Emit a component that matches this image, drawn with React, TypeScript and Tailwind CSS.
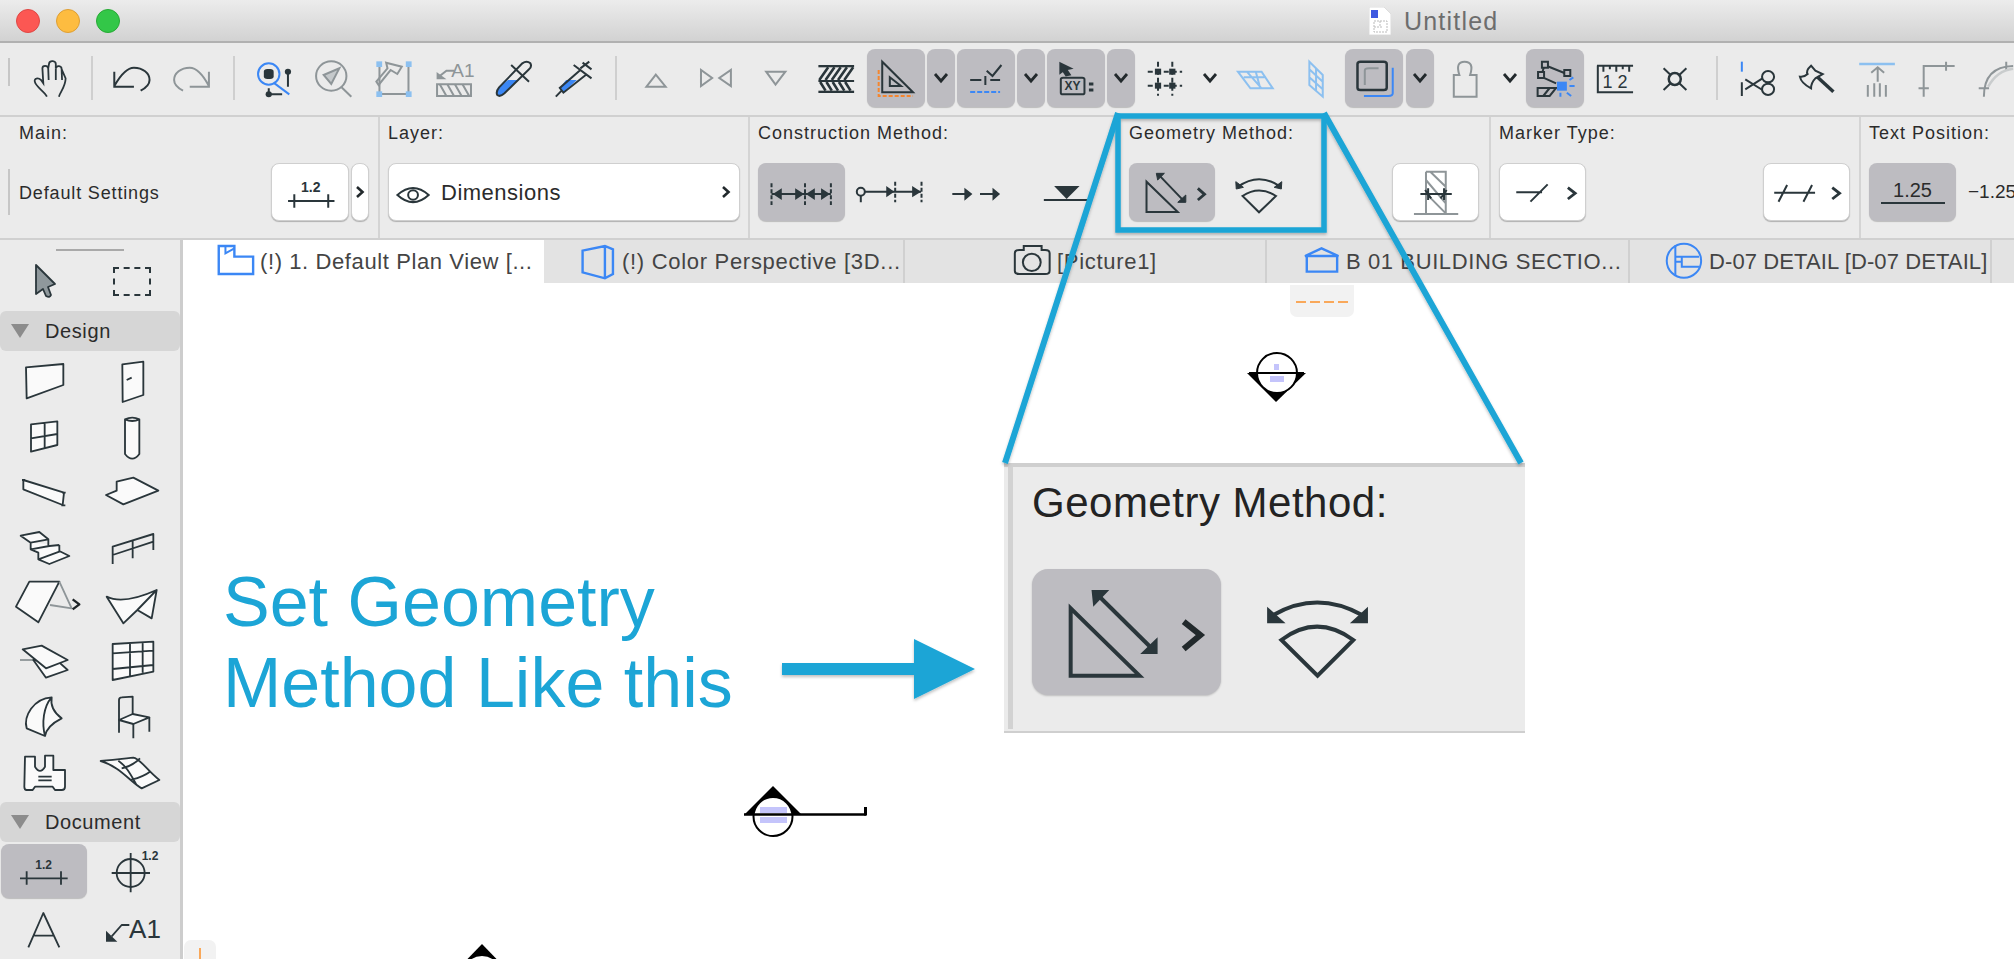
// App.tsx - Archicad window with geometry method annotation
import React from 'react';

const DARK = '#2a363b';
const GRAY = '#8e9598';
const BLUE = '#3b87f5';
const SKY = '#8cc0f0';
const CYAN = '#1ca5d6';

type ZProps = { x: number; y: number; w: number; h: number; ox?: number; oy?: number; sx?: number; sy?: number; children?: React.ReactNode };

// svg that takes its coordinates straight from the zoomed crops (x is 2.24x or 2.326x, y is 3x there)
const Z = ({ x, y, w, h, ox = 0, oy = 0, sx, sy = 3, children }: ZProps) => {
  const kx = sx ?? (ox === 1340 ? 2.326 : 2.24);
  return (
    <svg
      width={w}
      height={h}
      viewBox={`${(x - ox) * kx} ${(y - oy) * sy} ${w * kx} ${h * sy}`}
      preserveAspectRatio="none"
      fill="none"
      stroke={DARK}
      strokeWidth={2}
      className="block shrink-0 overflow-visible [&_*]:[vector-effect:non-scaling-stroke]"
    >
      {children}
    </svg>
  );
};

// text inside a Z svg, undoes the uneven scale
const T = ({ x, y, size, bold, fill = DARK, k = 0.7467, children }: { x: number; y: number; size: number; bold?: boolean; fill?: string; k?: number; children: React.ReactNode }) => (
  <text
    transform={`translate(${x} ${y}) scale(${k} 1)`}
    fontSize={size * 3}
    fontWeight={bold ? 700 : 400}
    textAnchor="middle"
    fill={fill}
    stroke="none"
  >
    {children}
  </text>
);

const ON = 'bg-[#bdbcc1] rounded-[8px] shadow-[0_1px_1px_rgba(0,0,0,0.2)]';
const WHITE = 'bg-white rounded-[8px] border border-[#cfcfcf] shadow-[0_1px_1px_rgba(0,0,0,0.25)]';

const Tool = ({ x, w = 60, ox = 0, on, className = '', children }: { x: number; w?: number; ox?: number; on?: boolean; className?: string; children?: React.ReactNode }) => (
  <div className={`h-[58px] shrink-0 ${on ? ON : ''} ${className}`}>
    <Z x={x} y={49} w={w} h={58} ox={ox}>
      {children}
    </Z>
  </div>
);

const ChevDown = () => (
  <svg width="16" height="12" viewBox="0 0 16 12" fill="none" stroke="#22292c" strokeWidth="2.8" className="shrink-0">
    <path d="M2 2 L8 9 L14 2" />
  </svg>
);

const DropBtn = ({ w = 28, on = true, className = '' }: { w?: number; on?: boolean; className?: string }) => (
  <div className={`h-[58px] shrink-0 flex items-center justify-center ${on ? ON : ''} ${className}`} style={{ width: w }}>
    <ChevDown />
  </div>
);

const Sep = ({ className = '' }: { className?: string }) => <div className={`w-[2px] h-[44px] shrink-0 bg-[#cfcfcf] ${className}`} />;

const Toolbar = () => (
  <div className="h-[72px] flex items-start pt-[6px] shrink-0 pl-[8px] overflow-hidden">
    <div className="w-[2px] h-[28px] mt-[9px] bg-[#c6c6c6] shrink-0" />
    <Tool x={20} className="ml-[10px]">
      <path d="M105 290 C100 275 80 260 78 245 C76 235 85 232 92 240 L97 250 L95 205 C95 195 107 195 108 205 L110 190 C112 180 125 182 125 192 V205 C127 195 138 197 138 207 L147 235 C147 260 135 275 132 290 M108 205 L109 240 M125 195 L125 240 M138 207 L139 240" strokeWidth={1.8} />
    </Tool>
    <Sep className="ml-[11px] mt-[7px]" />
    <Tool x={102} className="ml-[9px]">
      <path d="M256 215 V260 H300 M256 258 C270 225 285 203 300 203 C320 203 335 220 335 240 C335 255 325 265 315 272" />
    </Tool>
    <Tool x={162}>
      <path stroke={GRAY} d="M468 215 V260 H425 M468 258 C455 225 440 203 425 203 C405 203 390 220 390 240 C390 255 400 265 410 272" />
    </Tool>
    <Sep className="ml-[11px] mt-[7px]" />
    <Tool x={245} className="ml-[10px]">
      <ellipse cx={602} cy={222} rx={24} ry={32} stroke={BLUE} />
      <rect x={591} y={207} width={22} height={30} rx={8} fill={DARK} stroke="none" />
      <path d="M615 250 L648 283" stroke={BLUE} />
      <path d="M645 215 V260 M602 265 V283 H632" />
      <ellipse cx={645} cy={215} rx={7} ry={9} fill={DARK} stroke="none" />
      <ellipse cx={602} cy={283} rx={7} ry={9} fill={DARK} stroke="none" />
    </Tool>
    <Tool x={305}>
      <ellipse cx={742} cy={228} rx={34} ry={44} stroke={GRAY} />
      <path d="M765 262 L787 290" stroke={GRAY} />
      <path d="M725 225 L760 205 L742 252 Z" stroke={GRAY} fill="#c5c9cb" />
    </Tool>
    <Tool x={365}>
      <path d="M850 200 V282 H915 V192" stroke={GRAY} />
      <path d="M865 188 L900 200 L890 222 L875 210 L848 255 L843 245 L868 205 Z" stroke={GRAY} />
      <rect x={843} y={184} width={13} height={17} fill={SKY} stroke="none" />
      <rect x={909} y={184} width={13} height={17} fill={SKY} stroke="none" />
      <rect x={843} y={274} width={13} height={17} fill={SKY} stroke="none" />
      <rect x={909} y={274} width={13} height={17} fill={SKY} stroke="none" />
    </Tool>
    <Tool x={425}>
      <T x={1037} y={232} size={19} fill={GRAY}>A1</T>
      <path d="M1018 212 H1000 L985 228" stroke={GRAY} />
      <path d="M978 216 V238 H1000 Z" fill={GRAY} stroke="none" />
      <rect x={979} y={253} width={76} height={35} stroke={GRAY} />
      <path d="M985 253 L1000 288 M1002 253 L1017 288 M1019 253 L1034 288 M1036 253 L1051 288" stroke={GRAY} />
    </Tool>
    <Tool x={485}>
      <path d="M1138 240 H1162 L1130 280 Q1120 292 1114 285 Q1110 275 1118 262 Z" fill={BLUE} stroke="none" />
      <path d="M1170 190 Q1180 180 1188 190 Q1192 200 1185 208 L1130 280 Q1120 292 1114 285 Q1110 275 1118 262 Z M1145 195 L1185 245" />
    </Tool>
    <Tool x={545}>
      <path d="M1268 240 H1292 L1262 278 L1254 264 Z" fill={BLUE} stroke="none" />
      <path d="M1300 210 L1254 264 L1262 278 L1312 225 M1258 272 L1245 290 M1285 195 L1325 235 M1300 205 L1320 185 M1305 188 L1325 208" />
    </Tool>
    <Sep className="ml-[10px] mt-[7px]" />
    <Tool x={626} className="ml-[9px]">
      <path d="M1469 224 L1491 260 H1448 Z" stroke={GRAY} />
    </Tool>
    <Tool x={686} ox={680}>
      <path d="M47 210 V258 L72 234 Z M114 210 V258 L88 234 Z" stroke={GRAY} />
    </Tool>
    <Tool x={746} ox={680}>
      <path d="M193 215 H236 L214 254 Z" stroke={GRAY} />
    </Tool>
    <Tool x={806} ox={680}>
      <rect x={310} y={195} width={80} height={7} fill={DARK} stroke="none" />
      <rect x={310} y={240} width={80} height={6} fill={DARK} stroke="none" />
      <rect x={310} y={272} width={80} height={7} fill={DARK} stroke="none" />
      <path strokeWidth={2.6} d="M312 240 L332 202 M326 240 L346 202 M340 240 L360 202 M354 240 L374 202 M368 240 L388 202 M314 246 L326 272 M328 246 L340 272 M342 246 L354 272 M356 246 L368 272 M370 246 L382 272" />
    </Tool>
    <Tool x={867} w={58} ox={680} on className="ml-[1px]">
      <path d="M453 185 V277 H522 Z M470 232 V258 H495 Z" />
      <path d="M445 210 V288 H522" stroke="#f5862e" strokeDasharray="4 2" />
    </Tool>
    <DropBtn className="ml-[2px]" />
    <Tool x={957} w={58} ox={680} on className="ml-[2px]">
      <path d="M650 240 H675 M695 240 H717 M684 228 V255 M687 212 L700 228 L720 195" />
      <path d="M650 276 H717" stroke={BLUE} strokeDasharray="5 2" />
    </Tool>
    <DropBtn className="ml-[2px]" />
    <Tool x={1047} w={58} ox={680} on className="ml-[2px]">
      <path d="M852 190 L875 205 L865 208 L873 224 L865 226 L858 212 L852 218 Z" fill={DARK} />
      <rect x={853} y={233} width={53} height={50} rx={5} />
      <T x={879} y={270} size={12} bold>XY</T>
      <path d="M916 252 H926 M916 270 H926" strokeWidth={3} />
    </Tool>
    <DropBtn className="ml-[2px]" />
    <Tool x={1136} ox={680}>
      <path d="M1073 185 V287 M1105 185 V287 M1050 215 H1127 M1050 257 H1127" strokeDasharray="5 3" />
      <rect x={1066} y={206} width={14} height={18} fill={DARK} stroke="none" />
      <rect x={1098} y={206} width={14} height={18} fill={DARK} stroke="none" />
      <rect x={1066} y={248} width={14} height={18} fill={DARK} stroke="none" />
      <rect x={1098} y={248} width={14} height={18} fill={DARK} stroke="none" />
    </Tool>
    <DropBtn w={30} on={false} />
    <Tool x={1226} ox={680}>
      <path d="M1252 215 H1305 L1330 265 H1280 Z M1265 232 H1315 M1292 215 L1302 265 M1272 215 L1305 265" stroke={SKY} />
    </Tool>
    <Tool x={1287} w={59} ox={680} className="ml-[1px]">
      <path d="M1412 185 L1442 225 V290 L1412 255 Z M1412 208 L1442 245 M1412 232 L1442 268 M1427 205 V272" stroke={SKY} />
    </Tool>
    <Tool x={1346} w={58} ox={1340} on>
      <path d="M125 203 V280 Q125 288 115 288 H58" stroke={BLUE} />
      <rect x={43} y={185} width={68} height={85} rx={7} strokeWidth={2.5} />
      <path d="M60 255 V212 Q60 205 70 205 H92" stroke={GRAY} />
    </Tool>
    <DropBtn className="ml-[3px]" />
    <Tool x={1436} ox={1340} className="ml-[1px]">
      <path d="M280 225 Q270 185 292 185 Q315 185 305 225 H320 V290 H267 V225 Z" stroke={GRAY} />
    </Tool>
    <DropBtn w={30} on={false} />
    <Tool x={1527} w={58} ox={1340} on className="ml-[1px]">
      <path d="M478 195 L530 222 M478 195 L470 230 M470 230 L505 250" />
      <rect x={472} y={185} width={14} height={18} fill="#bdbcc1" />
      <rect x={524} y={210} width={14} height={18} fill="#bdbcc1" />
      <rect x={463} y={216} width={14} height={18} fill="#bdbcc1" />
      <path d="M462 288 V264 H505 L490 288 Z M475 288 L490 264" />
      <rect x={507} y={245} width={23} height={27} fill={BLUE} stroke="none" />
      <path d="M536 240 L545 232 M536 258 H548 M530 278 L540 288 M515 278 V290" stroke={BLUE} />
    </Tool>
    <Tool x={1586} ox={1340} className="ml-[1px]">
      <path d="M602 197 V277 H684 M600 197 H684 M615 197 V215 M630 197 V208 M645 197 V215 M660 197 V208 M675 197 V215" />
      <T x={642} y={265} size={18} k={0.775}>1 2</T>
    </Tool>
    <Tool x={1646} ox={1340}>
      <path d="M755 205 L808 270 M808 205 L755 270" />
      <ellipse cx={781} cy={237} rx={14} ry={18} fill="#ebebeb" strokeWidth={2.5} />
    </Tool>
    <Sep className="ml-[11px] mt-[7px]" />
    <Tool x={1728} ox={1340} className="ml-[9px]">
      <path d="M937 185 V215" stroke={BLUE} />
      <path d="M937 247 V288 M945 238 L985 270 M945 268 L985 235" />
      <ellipse cx={998} cy={230} rx={14} ry={17} />
      <ellipse cx={998} cy={268} rx={14} ry={17} />
    </Tool>
    <Tool x={1788} ox={1340}>
      <path d="M1098 197 L1108 212 L1125 222 L1108 235 Q1098 248 1098 265 Q1075 250 1072 230 Q1082 232 1090 222 Q1085 212 1098 197 Z" />
      <path d="M1112 230 L1150 275" strokeWidth={3.5} />
    </Tool>
    <Tool x={1848} ox={1340}>
      <path d="M1210 192 H1293" stroke={SKY} strokeWidth={2.5} />
      <path d="M1253 202 V245 M1238 218 L1253 202 L1268 218 M1230 255 V290 M1245 250 V290 M1258 250 V290 M1272 255 V290" stroke={GRAY} />
    </Tool>
    <Tool x={1908} ox={1340}>
      <path d="M1360 290 V198 H1432 M1412 185 V212 M1348 265 H1372" stroke={GRAY} />
    </Tool>
    <Tool x={1968} ox={1340}>
      <path d="M1500 290 Q1500 200 1568 198 M1488 265 H1512 M1552 185 V212" stroke={GRAY} />
      <path d="M1510 260 Q1530 212 1568 206" stroke="#c9cccd" strokeWidth={2.5} />
    </Tool>
  </div>
);

const RightChev = () => (
  <svg width="10" height="14" viewBox="0 0 10 14" fill="none" stroke="#22292c" strokeWidth="2.6" className="shrink-0">
    <path d="M2 2 L7.5 7 L2 12" />
  </svg>
);

const Label = ({ children }: { children: React.ReactNode }) => (
  <div className="text-[18px] leading-[22px] tracking-[1px] text-[#2b2b2b] h-[46px] pt-[5px] whitespace-nowrap">{children}</div>
);

const InfoBox = () => (
  <div className="h-[125px] shrink-0 flex border-t-2 border-b-2 border-[#d0d0d0] overflow-hidden">
    {/* Main */}
    <div className="w-[380px] shrink-0 border-r-2 border-[#d4d4d4] relative pl-[19px]">
      <Label>Main:</Label>
      <div className="flex items-center">
        <div className="w-[2px] h-[46px] bg-[#c6c6c6] -ml-[11px] mr-[9px] shrink-0" />
        <span className="text-[18px] tracking-[0.85px] text-[#2b2b2b] w-[252px] whitespace-nowrap mt-[2px]">Default Settings</span>
        <div className={`${WHITE} w-[78px] h-[58px] flex items-center justify-center`}>
          <Z x={271} y={163} w={76} h={56}>
            <T x={694} y={572} size={14} bold>1.2</T>
            <path d="M643 600 H747 M657 580 V620 M733 580 V620" />
          </Z>
        </div>
        <div className={`${WHITE} w-[18px] h-[58px] ml-[2px] flex items-center justify-center`}>
          <RightChev />
        </div>
      </div>
    </div>
    {/* Layer */}
    <div className="w-[370px] shrink-0 border-r-2 border-[#d4d4d4] pl-[8px]">
      <Label>Layer:</Label>
      <div className={`${WHITE} w-[352px] h-[58px] flex items-center pl-[7px] pr-[8px]`}>
        <Z x={395} y={163} w={36} h={56}>
          <path d="M888 582 Q923 540 958 582 Q923 625 888 582 Z" />
          <ellipse cx={923} cy={582} rx={11} ry={14} />
        </Z>
        <span className="ml-[9px] text-[22px] tracking-[0.5px] text-[#2b2b2b] flex-1">Dimensions</span>
        <RightChev />
      </div>
    </div>
    {/* Construction Method */}
    <div className="w-[370px] shrink-0 pl-[8px]">
      <Label>Construction Method:</Label>
      <div className="flex h-[58px]">
        <div className={`${ON} w-[87px] h-[58px]`}>
          <Z x={758} y={163} w={87} h={58} ox={680}>
            <path d="M205 582 H338" />
            <path d="M205 550 V615 M280 550 V615 M338 550 V615" strokeDasharray="4 2" />
            <path d="M208 582 L228 565 V600 Z M278 582 L258 565 V600 Z M282 582 L302 565 V600 Z M336 582 L316 565 V600 Z" fill={DARK} stroke="none" />
          </Z>
        </div>
        <Z x={845} y={163} w={90} h={58} ox={680}>
          <ellipse cx={405} cy={575} rx={9} ry={12} />
          <path d="M414 575 H540 M405 587 V607" />
          <path d="M480 575 L462 558 V592 Z M540 575 L520 558 V592 Z" fill={DARK} stroke="none" />
          <path d="M482 545 V607 M541 545 V607" strokeDasharray="4 2" />
        </Z>
        <Z x={935} y={163} w={85} h={58} ox={680}>
          <path d="M610 582 H650 M672 582 H712" />
          <path d="M655 582 L637 563 V602 Z M717 582 L700 563 V602 Z" fill={DARK} stroke="none" />
        </Z>
        <Z x={1020} y={163} w={80} h={58} ox={680}>
          <path d="M838 558 H895 L866 597 Z" fill={DARK} stroke="none" />
          <path d="M815 600 H915" />
        </Z>
      </div>
    </div>
    {/* Geometry Method */}
    <div className="w-[371px] shrink-0 border-r-2 border-[#d4d4d4] pl-[9px]">
      <Label>Geometry Method:</Label>
      <div className="flex h-[58px]">
        <div className={`${ON} w-[86px] h-[58px]`}>
          <Z x={1129} y={163} w={86} h={58} ox={680}>
            <path d="M1045 545 V636 H1115 Z M1072 524 L1130 605" />
            <path d="M1067 520 H1085 L1070 540 Z M1133 607 H1115 L1133 585 Z" fill={DARK} stroke={DARK} strokeWidth={1} />
            <path d="M1160 565 L1175 583 L1160 600" strokeWidth={2.8} />
          </Z>
        </div>
        <Z x={1215} y={163} w={90} h={58} ox={680}>
          <path d="M1250 560 Q1297 515 1345 560" />
          <path d="M1245 545 L1262 562 L1246 567 Z M1348 545 L1331 562 L1347 567 Z" fill={DARK} stroke={DARK} strokeWidth={1} />
          <path d="M1260 588 Q1297 555 1335 588 L1297 637 Z" />
        </Z>
        <div className="flex-1" />
        <div className={`${WHITE} w-[87px] h-[58px] mr-[10px]`}>
          <Z x={1393} y={164} w={85} h={56} ox={1340}>
            <path d="M172 642 H275 M200 515 H246 V642 M200 515 V642 M200 540 L246 610 M200 580 L246 640 M210 515 L246 560" stroke={GRAY} />
            <path d="M187 582 H260 M205 565 V600 M242 565 V600 M198 570 L212 595 M248 570 L234 595" />
          </Z>
        </div>
      </div>
    </div>
    {/* Marker Type */}
    <div className="w-[370px] shrink-0 border-r-2 border-[#d4d4d4] pl-[8px]">
      <Label>Marker Type:</Label>
      <div className="flex items-center">
        <div className={`${WHITE} w-[87px] h-[58px]`}>
          <Z x={1500} y={164} w={85} h={56} ox={1340}>
            <path d="M410 577 H470 M443 605 L483 553" />
            <path d="M530 563 L547 580 L530 597" strokeWidth={2.8} />
          </Z>
        </div>
        <div className="w-[177px] shrink-0" />
        <div className={`${WHITE} w-[87px] h-[58px]`}>
          <Z x={1764} y={164} w={85} h={56} ox={1340}>
            <path d="M1010 578 H1105 M1020 605 L1040 555 M1078 605 L1098 555" />
            <path d="M1145 563 L1162 580 L1145 597" strokeWidth={2.8} />
          </Z>
        </div>
      </div>
    </div>
    {/* Text Position */}
    <div className="flex-1 pl-[8px] whitespace-nowrap">
      <Label>Text Position:</Label>
      <div className="flex items-center">
        <div className={`${ON} w-[87px] h-[58px] flex flex-col items-center justify-center shrink-0`}>
          <span className="text-[20px] leading-[22px] text-[#2b2b2b] -mt-[2px]">1.25</span>
          <div className="w-[64px] h-[2px] bg-[#2a363b] mt-[1px]" />
        </div>
        <span className="ml-[12px] text-[19px] text-[#2b2b2b]">−1.25</span>
      </div>
    </div>
  </div>
);

const Tab = ({ active, className, children, label }: { active?: boolean; className: string; children: React.ReactNode; label: string }) => (
  <div className={`h-[43px] shrink-0 flex items-center whitespace-nowrap overflow-hidden text-[22px] text-[#444] ${active ? 'bg-white' : 'border-r-2 border-[#d0d0d0]'} ${className}`}>
    {children}
    <span>{label}</span>
  </div>
);

const Tabs = () => (
  <div className="h-[43px] shrink-0 flex bg-[#e3e3e3]">
    <Tab active className="w-[361px] pl-[35px] tracking-[0.6px]" label="(!) 1. Default Plan View [...">
      <div className="mr-[6px]">
        <Z x={218} y={240} w={36} h={43}>
          <path d="M490 738 H525 V770 H567 V822 H490 Z" stroke={BLUE} strokeWidth={2.4} />
          <path d="M505 738 V760 L525 745" stroke={BLUE} />
        </Z>
      </div>
    </Tab>
    <Tab className="w-[361px] pl-[38px] tracking-[0.7px]" label="(!) Color Perspective [3D...">
      <div className="mr-[8px]">
        <Z x={582} y={240} w={32} h={43}>
          <path d="M1305 752 L1355 738 L1373 748 V822 L1355 835 L1305 817 Z M1355 738 V835" stroke={BLUE} strokeWidth={2.4} />
        </Z>
      </div>
    </Tab>
    <Tab className="w-[362px] pl-[109px] tracking-[0.7px]" label="[Picture1]">
      <div className="mr-[7px]">
        <Z x={1014} y={240} w={36} h={43} ox={680}>
          <path d="M750 760 Q750 750 760 750 H770 V738 H810 V750 H818 Q828 750 828 760 V812 Q828 822 818 822 H760 Q750 822 750 812 Z" />
          <ellipse cx={788} cy={787} rx={20} ry={26} />
        </Z>
      </div>
    </Tab>
    <Tab className="w-[363px] pl-[38px] tracking-[0.6px]" label="B 01 BUILDING SECTIO...">
      <div className="mr-[8px]">
        <Z x={1305} y={240} w={33} h={43} ox={680}>
          <path d="M1400 768 L1437 745 L1475 768 Z M1404 770 V815 H1472 V770" stroke={BLUE} strokeWidth={2.4} />
        </Z>
      </div>
    </Tab>
    <Tab className="w-[362px] pl-[37px] tracking-[0.1px]" label="D-07 DETAIL [D-07 DETAIL]">
      <div className="mr-[8px]">
        <Z x={1667} y={240} w={34} h={43} ox={1340}>
          <ellipse cx={800} cy={782} rx={40} ry={51} stroke={BLUE} />
          <path d="M780 736 V828 M780 770 H835 M795 770 V800 H835 M780 785 H795" stroke={BLUE} />
        </Z>
      </div>
    </Tab>
  </div>
);

// sidebar icons: coordinates are the 3x crop's, col and top say which cell of the crop is shown
const Cell = ({ col, top, children }: { col: number; top: number; children?: React.ReactNode }) => (
  <svg viewBox={`${col * 264} ${top} 264 168`} width="88" height="56" fill="#fafafa" stroke={DARK} strokeWidth="5.5" strokeLinejoin="round" className="block overflow-visible">
    {children}
  </svg>
);

const SectionHead = ({ label }: { label: string }) => (
  <div className="h-[40px] bg-[#d6d6d6] rounded-[6px] flex items-center w-[180px] shrink-0">
    <svg width="18" height="14" viewBox="0 0 18 14" className="ml-[11px] shrink-0">
      <path d="M0 0 H18 L9 14 Z" fill="#8c8c8c" />
    </svg>
    <span className="ml-[16px] text-[20px] tracking-[0.6px] text-[#2b2b2b]">{label}</span>
  </div>
);

const Sidebar = () => (
  <div className="w-[183px] shrink-0 border-r-[3px] border-[#cdcdcd] flex flex-col overflow-hidden">
    <div className="w-[68px] h-[2px] bg-[#a9a9a9] ml-[56px] mt-[9px] shrink-0" />
    <div className="flex items-center h-[60px] shrink-0">
      <div className="w-[88px] flex justify-center">
        <svg width="24" height="36" viewBox="0 0 24 36" className="ml-[2px]">
          <path d="M3 2 L22 21 L15 24 L18 32 Q17 35 13 33 L10 26 L3 31 Z" fill="#8f989c" stroke={DARK} strokeWidth="1.8" strokeLinejoin="round" />
        </svg>
      </div>
      <div className="w-[88px] flex justify-center">
        <div className="w-[38px] h-[29px] border-2 border-dashed border-[#2a363b]" />
      </div>
    </div>
    <SectionHead label="Design" />
    <div className="grid grid-cols-[88px_88px] auto-rows-[56px] mt-[3px] shrink-0">
      <Cell col={0} top={372}><path d="M78 412 L190 402 V465 L80 505 Z" /></Cell>
      <Cell col={1} top={372}><path d="M367 403 L430 395 V495 L368 516 Z M380 450 L395 443" /></Cell>
      <Cell col={0} top={540}><path d="M93 583 L172 574 V645 L93 665 Z M134 578 V655 M93 625 L172 612" /></Cell>
      <Cell col={1} top={540}><path d="M375 568 Q397 558 418 568 V672 Q397 700 375 672 Z M375 568 Q397 578 418 568" /></Cell>
      <Cell col={0} top={708}><path d="M70 750 L192 788 L188 825 L70 778 Z M66 750 H76 M184 826 H196 M186 788 H197" /></Cell>
      <Cell col={1} top={708}><path d="M350 755 L400 743 L475 782 L370 823 L318 795 L350 782 Z" /></Cell>
      <Cell col={0} top={876}><path d="M62 917 L118 906 L145 928 L92 938 Z M92 938 V958 L148 948 L178 945 M145 928 V948 M92 958 L115 968 V988 L178 965 V945 M115 988 L148 1002 L208 978 L178 963" /></Cell>
      <Cell col={1} top={876}><path fill="none" d="M338 1002 V950 L460 912 V960 M338 975 L460 935 M398 932 V985" /></Cell>
      <Cell col={0} top={-36}>
        <path d="M48 50 L88 -25 H178 L115 97 Z" />
        <path d="M178 -25 L215 55 L150 45" fill="none" stroke={GRAY} />
        <path d="M218 28 L238 43 L218 58" fill="none" stroke="#1d2326" strokeWidth="7" />
      </Cell>
      <Cell col={1} top={-36}><path d="M320 20 Q370 45 470 0 L455 85 L412 60 L370 100 Z M412 60 L470 0" /></Cell>
      <Cell col={0} top={132}>
        <path d="M60 210 H100" stroke={GRAY} fill="none" />
        <path d="M100 210 L138 263 L203 240 L175 215 Z" />
        <path d="M68 178 L125 167 L203 210 L138 235 Z" />
      </Cell>
      <Cell col={1} top={132}><path d="M338 162 L460 155 V245 L338 270 Z M338 190 L460 182 M338 237 L460 225 M390 160 V258 M428 157 V248" /></Cell>
      <Cell col={0} top={300}><path d="M155 322 C100 325 70 380 80 415 L135 438 C140 410 165 395 185 385 C165 370 150 350 155 322 Z M155 322 C130 350 125 400 135 438" /></Cell>
      <Cell col={1} top={300}>
        <path fill="none" d="M357 390 V330 Q357 322 365 322 L398 320 V372 M357 390 V428 M400 402 V445 M448 382 V425" />
        <path d="M357 390 L400 402 L448 382 L398 372 Z" />
      </Cell>
      <Cell col={0} top={468}><path d="M75 500 H105 V530 Q120 555 135 530 V497 H160 V540 H195 V590 Q195 600 185 600 H165 L158 590 H105 L98 600 H80 Q73 600 73 590 Z M115 560 H155 M115 571 H155" /></Cell>
      <Cell col={1} top={468}><path d="M302 513 C350 510 380 505 400 503 C420 505 440 540 478 570 L425 595 C390 575 360 530 302 513 Z M355 512 C380 530 390 550 410 585 M420 505 C405 520 390 530 365 535 M450 545 C430 560 410 565 392 570" /></Cell>
    </div>
    <SectionHead label="Document" />
    <div className="grid grid-cols-[88px_88px] auto-rows-[56px] mt-[2px] shrink-0">
      <div className={`${ON} h-[54px] ml-[1px] w-[86px]`}>
        <svg viewBox="3 768 258 162" width="86" height="54" fill="none" stroke={DARK} strokeWidth="5.5" className="block">
          <text x="131" y="842" fontSize="36" fontWeight="700" textAnchor="middle" fill={DARK} stroke="none">1.2</text>
          <path d="M60 871 H203 M80 850 V890 M183 850 V890" />
        </svg>
      </div>
      <Cell col={1} top={765}>
        <circle cx={392} cy={852} r={42} fill="none" />
        <path d="M335 852 H450 M392 792 V910" />
        <text x="450" y="812" fontSize="36" fontWeight="700" textAnchor="middle" fill={DARK} stroke="none">1.2</text>
      </Cell>
      <Cell col={0} top={933}><path fill="none" d="M85 1075 L130 972 L178 1075 M103 1040 H160" /></Cell>
      <Cell col={1} top={933}>
        <path d="M318 1025 V1058 H352 Z" fill={DARK} stroke="none" />
        <path d="M335 1042 L365 1008 H388" fill="none" />
        <text x="435" y="1046" fontSize="78" textAnchor="middle" fill={DARK} stroke="none">A1</text>
      </Cell>
    </div>
  </div>
);

const Inset = () => (
  <div className="absolute left-[1004px] top-[463px] w-[521px] h-[270px] bg-[#ebebeb] border-t-4 border-b-2 border-[#cfcfcf] pl-[28px] flex flex-col">
    <div className="absolute left-[4px] top-0 bottom-[2px] w-[5px] bg-[#d2d2d2]" />
    <div className="text-[42px] leading-[40px] tracking-[0.5px] text-[#232323] mt-[16px] whitespace-nowrap">Geometry Method:</div>
    <div className="flex items-start mt-[46px] ">
      <div className="w-[189px] h-[126px] bg-[#bdbcc1] rounded-[16px] shadow-[0_1px_2px_rgba(0,0,0,0.2)] shrink-0">
        <Z x={1032} y={569} w={189} h={126} ox={990} oy={450} sx={2.876}>
          <path d="M232 475 V677 H430 Z" strokeWidth={4} />
          <path d="M310 435 L470 600" strokeWidth={4} />
          <path d="M292 420 H343 L297 470 Z M482 612 H432 L482 562 Z" fill={DARK} stroke="none" />
          <path d="M557 515 L605 555 L557 597" strokeWidth={6} stroke="#22292c" />
        </Z>
      </div>
      <Z x={1221} y={569} w={190} h={126} ox={990} oy={450} sx={2.876}>
        <path d="M815 495 Q940 420 1070 495" strokeWidth={4} />
        <path d="M797 470 L850 520 H797 Z M1087 470 L1035 520 H1087 Z" fill={DARK} stroke="none" />
        <path d="M838 570 Q940 490 1045 570 L942 677 Z" strokeWidth={4} />
      </Z>
    </div>
  </div>
);

const Symbols = () => (
  <svg width="2014" height="959" className="absolute inset-0 pointer-events-none">
    {/* section marks on the plan */}
    <path d="M1247 373 H1306 L1276 402 Z" fill="black" />
    <circle cx="1277" cy="373" r="20" fill="white" stroke="black" strokeWidth="2" />
    <rect x="1249" y="372" width="55" height="2" fill="black" />
    <rect x="1274" y="364" width="5" height="6" fill="#c4c4fb" />
    <rect x="1270" y="376" width="14" height="6" fill="#c4c4fb" />

    <path d="M773 786 L802 815 H744 Z" fill="black" />
    <circle cx="773" cy="816.5" r="19.5" fill="white" stroke="black" strokeWidth="2" />
    <rect x="760" y="807" width="27" height="6" fill="#c4c4fb" />
    <rect x="760" y="817" width="27" height="6" fill="#c4c4fb" />
    <path d="M744 814.5 H866" stroke="black" strokeWidth="2.4" fill="none" />
    <path d="M865.5 815.5 V807" stroke="black" strokeWidth="3" fill="none" />

    <path d="M482 944 L512 975 H452 Z" fill="black" />
    <circle cx="482" cy="975" r="20" fill="white" stroke="black" strokeWidth="2" />
  </svg>
);

const Annotations = () => (
  <svg width="2014" height="959" className="absolute inset-0 pointer-events-none">
    <defs>
      <filter id="soft" x="-10%" y="-10%" width="120%" height="120%">
        <feDropShadow dx="0" dy="2" stdDeviation="1.5" floodOpacity="0.25" />
      </filter>
    </defs>
    <g filter="url(#soft)">
      <path d="M1118 116 H1324 V230 H1118 Z" fill="none" stroke={CYAN} strokeWidth="5.5" />
      <path d="M1118 113 L1005 463 M1324 113 L1521 463" stroke={CYAN} strokeWidth="6" fill="none" />
      <path d="M782 663 H914 V639 L975 669 L914 699 V675 H782 Z" fill={CYAN} />
    </g>
  </svg>
);

export default function App() {
  return (
    <div className="relative w-[2014px] h-[959px] overflow-hidden bg-[#ebebeb] font-['Liberation_Sans',sans-serif] flex flex-col">
      {/* title bar */}
      <div className="h-[43px] shrink-0 flex items-center bg-gradient-to-b from-[#ececec] to-[#d2d2d2] border-b-[2px] border-[#b1b1b1] pl-[16px]">
        <div className="w-[24px] h-[24px] rounded-full bg-[#fc5753] border border-[#df4744]" />
        <div className="w-[24px] h-[24px] rounded-full bg-[#fdbc40] border border-[#de9f34] ml-[16px]" />
        <div className="w-[24px] h-[24px] rounded-full bg-[#33c748] border border-[#27aa35] ml-[16px]" />
        <svg width="22" height="28" viewBox="0 0 22 28" className="ml-[1249px] shrink-0">
          <path d="M0 0 H15 L22 7 V28 H0 Z" fill="#fff" stroke="#ddd" />
          <path d="M2 3 H9 V11 H2 Z" fill="#3f5ae0" />
          <path d="M5 14 H18 V25 H5 Z M11 14 V20 M5 20 H14" fill="none" stroke="#bbb" strokeDasharray="2 1" />
        </svg>
        <span className="ml-[13px] mt-[2px] text-[25px] tracking-[1.2px] text-[#6d6d6d]">Untitled</span>
      </div>
      <Toolbar />
      <InfoBox />
      <div className="flex-1 flex min-h-0">
        <Sidebar />
        <div className="flex-1 flex flex-col min-w-0 overflow-hidden">
          <Tabs />
          <div className="flex-1 bg-white" />
        </div>
      </div>
      {/* small tabs on the canvas */}
      <div className="absolute left-[1290px] top-[285px] w-[64px] h-[32px] bg-[#f2f2f2] rounded-b-[7px] flex justify-center gap-[4px] pt-[16px]">
        <div className="w-[10px] h-[2px] bg-[#f9a85a]" />
        <div className="w-[10px] h-[2px] bg-[#f9a85a]" />
        <div className="w-[10px] h-[2px] bg-[#f9a85a]" />
        <div className="w-[10px] h-[2px] bg-[#f9a85a]" />
      </div>
      <div className="absolute left-[184px] top-[940px] w-[32px] h-[19px] bg-[#f2f2f2] rounded-t-[7px] pl-[15px] pt-[8px]">
        <div className="w-[2px] h-[11px] bg-[#f9a85a]" />
      </div>
      <Symbols />
      <Inset />
      <Annotations />
      {/* callout */}
      <div className="absolute left-[223px] top-[562px] text-[70px] leading-[81px] text-[#1ca5d6] whitespace-nowrap">
        <div>Set Geometry</div>
        <div>Method Like this</div>
      </div>
    </div>
  );
}
